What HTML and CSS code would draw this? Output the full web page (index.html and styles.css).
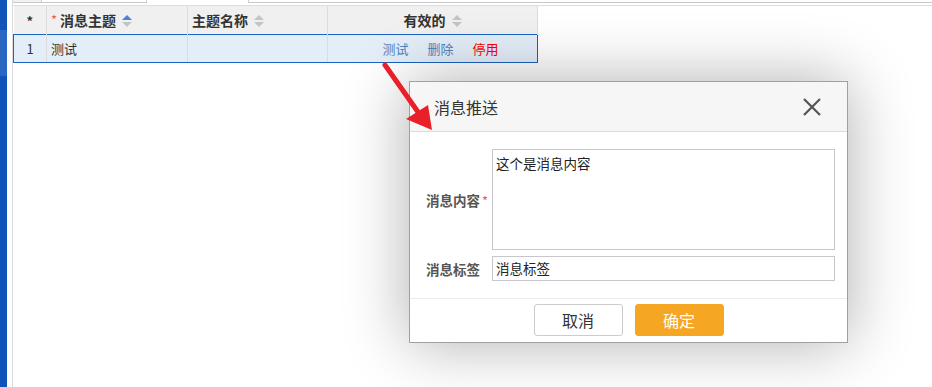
FILE: index.html
```html
<!DOCTYPE html>
<html lang="zh-CN">
<head>
    <meta charset="UTF-8">
    <title>消息推送</title>
    <link rel="stylesheet" href="styles.css">
</head>
<body>
    <div class="page">
        <aside class="sidebar">
            <div class="sidebar-active"></div>
        </aside>

        <main class="content">
            <div class="tabs">
                <span class="tab tab-first"></span>
                <span class="tab tab-current"></span>
                <span class="tab tab-gap"></span>
                <span class="tab tab-rest"></span>
            </div>

            <table class="grid">
                <colgroup>
                    <col class="col-no">
                    <col class="col-topic">
                    <col class="col-name">
                    <col class="col-valid">
                </colgroup>
                <thead>
                    <tr>
                        <th class="center">*</th>
                        <th><span class="req">*</span>消息主题<span class="sort asc"></span></th>
                        <th>主题名称<span class="sort"></span></th>
                        <th class="center">有效的<span class="sort"></span></th>
                    </tr>
                </thead>
                <tbody>
                    <tr class="selected">
                        <td class="center">1</td>
                        <td>测试</td>
                        <td></td>
                        <td class="center actions">
                            <a href="#">测试</a>
                            <a href="#">删除</a>
                            <a href="#" class="danger">停用</a>
                        </td>
                    </tr>
                </tbody>
            </table>
        </main>
    </div>

    <!-- pointer drawn over the screenshot -->
    <svg class="arrow" width="80" height="90" viewBox="0 0 80 90">
        <line x1="5" y1="5" x2="38" y2="52" stroke="#e8202a" stroke-width="5" stroke-linecap="round"/>
        <polygon points="26,59 48,45 52,70" fill="#e8202a"/>
    </svg>

    <div class="dialog">
        <div class="dialog-head">
            <span class="dialog-title">消息推送</span>
            <svg class="close" width="20" height="20" viewBox="0 0 20 20">
                <path d="M2 2 L18 18 M18 2 L2 18" stroke="#555" stroke-width="2.2" fill="none"/>
            </svg>
        </div>
        <div class="dialog-body">
            <div class="field">
                <label class="field-label">消息内容<span class="req">*</span></label>
                <div class="textarea">这个是消息内容</div>
            </div>
            <div class="field">
                <label class="field-label">消息标签</label>
                <div class="input">消息标签</div>
            </div>
        </div>
        <div class="dialog-foot">
            <button class="btn">取消</button>
            <button class="btn btn-primary">确定</button>
        </div>
    </div>
</body>
</html>
```

FILE: styles.css
```css
body {
    margin: 0;
    font-family: "Noto Sans CJK SC", "Liberation Sans", sans-serif;
    font-size: 13px;
    color: #333;
    background: #fff;
}
.page {
    display: flex;
    height: 387px;
    overflow: hidden;
}
.sidebar {
    width: 7px;
    background-color: #1054ba;
    padding-top: 30px;
    box-sizing: border-box;
}
.sidebar-active {
    height: 46px;
    background-color: #2a67c3;
}
.content {
    flex: 1;
    margin-left: 5px;
    border-left: 1px solid #dcdcdc;
}
.tabs {
    display: flex;
    height: 5px;
    border-bottom: 1px solid #dedede;
}
.tab {
    height: 2px;
    border-bottom: 1px solid #c8c8c8;
}
.tab-first {
    width: 28px;
    background: #eef2f7;
}
.tab-current {
    width: 104px;
    border-left: 1px solid #cfcfcf;
    border-right: 1px solid #cfcfcf;
    background: #fff;
}
.tab-gap {
    width: 101px;
    border-bottom: none;
}
.tab-rest {
    flex: 1;
    border-left: 1px solid #cfcfcf;
}

/* grid */
.grid {
    border-collapse: collapse;
    table-layout: fixed;
    width: 524px;
}
.col-no { width: 33px; }
.col-topic { width: 141px; }
.col-name { width: 140px; }
.col-valid { width: 210px; }
.grid th {
    height: 28px;
    padding: 0 4px;
    background-color: #f0f0f0;
    border-right: 1px solid #dcdcdc;
    text-align: left;
    font-weight: bold;
    font-size: 14px;
    color: #333;
    white-space: nowrap;
}
.grid th:first-child {
    font-size: 13px;
}
.grid th .req {
    margin-right: 3px;
}
.grid td {
    height: 27px;
    padding: 0 4px;
    border-right: 1px solid #dcdcdc;
    white-space: nowrap;
}
.grid .center {
    text-align: center;
}
.grid tr.selected td {
    background-color: #e4eef9;
    border-top: 1px solid #1a63c0;
    border-bottom: 1px solid #1a63c0;
}
.grid tr.selected td:first-child {
    border-left: 1px solid #1a63c0;
}
.grid tr.selected td:last-child {
    border-right: 1px solid #1a63c0;
}
.req {
    color: #f05a5a;
    font-weight: normal;
    font-size: 13px;
    margin-right: 1px;
    vertical-align: 1px;
}
.sort {
    display: inline-block;
    position: relative;
    width: 10px;
    height: 12px;
    margin-left: 6px;
    vertical-align: -1px;
}
.sort::before,
.sort::after {
    content: "";
    position: absolute;
    left: 0;
    border-left: 5px solid transparent;
    border-right: 5px solid transparent;
}
.sort::before {
    top: 0;
    border-bottom: 5px solid #c4c4c4;
}
.sort::after {
    bottom: 0;
    border-top: 5px solid #c4c4c4;
}
.sort.asc::before {
    border-bottom-color: #4f7fd9;
}
.grid td.actions {
    padding-left: 20px;
}
.actions a {
    color: #4d86bf;
    text-decoration: none;
    margin: 0 8px;
}
.actions a.danger {
    color: #f00;
}

/* overlay */
.arrow {
    position: absolute;
    left: 380px;
    top: 60px;
    z-index: 2;
}
.dialog {
    position: absolute;
    left: 409px;
    top: 81px;
    width: 437px;
    border: 1px solid #a0a0a0;
    background: #fff;
    box-shadow: 0 0 60px rgba(0, 0, 0, 0.32);
    z-index: 1;
}
.dialog-head {
    display: flex;
    align-items: center;
    justify-content: space-between;
    height: 49px;
    padding: 0 25px 0 24px;
    background-color: #f6f6f6;
    border-bottom: 1px solid #dcdcdc;
}
.dialog-title {
    font-size: 16px;
    color: #333;
}
.close {
    display: block;
}
.dialog-body {
    display: flex;
    flex-direction: column;
    gap: 6px;
    padding: 17px 12px 17px 0;
    border-bottom: 1px solid #ececec;
}
.field {
    display: flex;
    align-items: center;
}
.field-label {
    width: 82px;
    text-align: right;
    padding-right: 12px;
    box-sizing: border-box;
    color: #555;
    font-size: 13.5px;
    font-weight: bold;
    white-space: nowrap;
}
.field-label .req {
    display: inline-block;
    width: 9px;
    margin: 0 -9px 0 0;
    padding-left: 2px;
    box-sizing: border-box;
    text-align: left;
    vertical-align: 0;
}
.textarea,
.input {
    flex: 1;
    border: 1px solid #c6c6cc;
    padding: 0 4px 0 3px;
    color: #222;
    font-size: 13.5px;
}
.textarea {
    height: 96px;
    padding-top: 3px;
}
.input {
    height: 23px;
    line-height: 23px;
}
.dialog-foot {
    display: flex;
    justify-content: center;
    gap: 12px;
    padding: 5px 0 6px;
}
.btn {
    width: 89px;
    height: 32px;
    border: 1px solid #cccccc;
    border-radius: 3px;
    background: #fff;
    color: #333;
    font-family: inherit;
    font-size: 16px;
}
.btn-primary {
    background-color: #f5a623;
    border-color: #f5a623;
    color: #fff;
}
```
